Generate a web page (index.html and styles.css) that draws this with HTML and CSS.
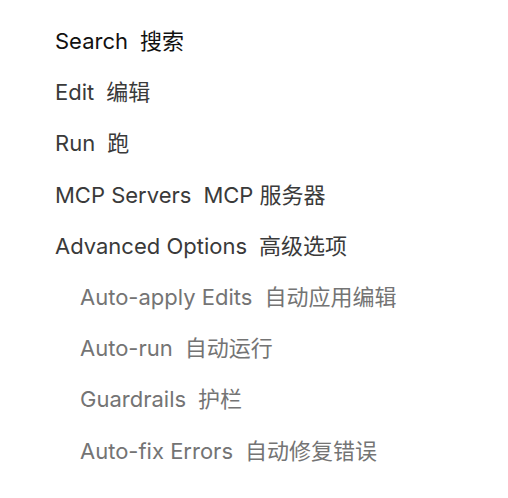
FILE: index.html
```html
<!DOCTYPE html>
<html lang="en">
<head>
  <meta charset="UTF-8">
  <meta name="viewport" content="width=device-width, initial-scale=1.0">
  <title>Settings Menu</title>
  <link rel="stylesheet" href="styles.css">
</head>
<body>
  <!-- Settings navigation -->
  <ul class="menu">
    <li class="menu-item active">Search<span class="zh">搜索</span></li>
    <li class="menu-item">Edit<span class="zh">编辑</span></li>
    <li class="menu-item">Run<span class="zh">跑</span></li>
    <li class="menu-item">MCP Servers<span class="zh">MCP 服务器</span></li>
    <li class="menu-item">Advanced Options<span class="zh">高级选项</span>
      <ul class="submenu">
        <li class="sub-item">Auto-apply Edits<span class="zh">自动应用编辑</span></li>
        <li class="sub-item">Auto-run<span class="zh">自动运行</span></li>
        <li class="sub-item">Guardrails<span class="zh">护栏</span></li>
        <li class="sub-item">Auto-fix Errors<span class="zh">自动修复错误</span></li>
      </ul>
    </li>
  </ul>
</body>
</html>
```
FILE: styles.css
```css
* {
  box-sizing: border-box;
}

body {
  margin: 0;
  padding: 0;
  background: #ffffff;
  font-family: Inter, "Noto Sans CJK SC", sans-serif;
}

.menu {
  list-style: none;
  margin: 0;
  padding: 16px 0 0 55px;
}

.menu-item {
  font-size: 22px;
  line-height: 51.2px;
  color: #3a3a3a;
}

.menu-item.active {
  color: #111111;
}

.zh {
  margin-left: 12px;
}

.submenu {
  list-style: none;
  margin: 0;
  padding: 0 0 0 25px;
}

.sub-item {
  font-size: 22px;
  line-height: 51.2px;
  color: #747474;
}
```
